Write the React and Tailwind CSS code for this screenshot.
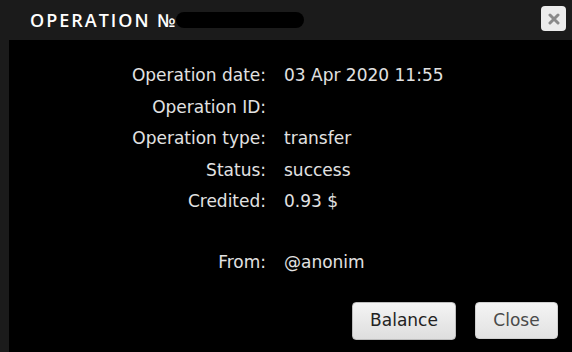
export default function App() {
  const rows = [
    ["Operation date:", "03 Apr 2020 11:55"],
    ["Operation ID:", ""],
    ["Operation type:", "transfer"],
    ["Status:", "success"],
    ["Credited:", "0.93 $"],
  ];
  return (
    <div className="w-[572px] h-[352px] bg-[#1b1b1b] flex flex-col overflow-hidden" style={{ fontFamily: "'DejaVu Sans', sans-serif" }}>
      <div className="h-[40px] flex items-center justify-between pl-[30px] pr-[6px] shrink-0">
        <div className="flex items-center">
          <span className="text-white text-[18px] font-semibold tracking-[2px] leading-none" style={{ fontFamily: "'Open Sans', sans-serif" }}>OPERATION №</span>
          <div className="ml-[-2px] w-[128px] h-[16px] bg-black rounded-full" />
        </div>
        <button className="w-[25px] h-[25px] rounded-[4px] bg-[#ececec] flex items-center justify-center mb-[3px]">
          <svg width="12" height="12" viewBox="0 0 12 12">
            <path d="M2 2 L10 10 M10 2 L2 10" stroke="#8a8a8a" strokeWidth="3" strokeLinecap="round" />
          </svg>
        </button>
      </div>
      <div className="flex-1 ml-[9px] bg-black flex flex-col">
        <div className="grid grid-cols-[257px_1fr] gap-x-[18px] gap-y-[8px] pt-[24px] text-[17px] text-[#e2e2e2] leading-[23.5px]">
          {rows.map(([k, v]) => (
            <div key={k} className="contents">
              <div className="text-right">{k}</div>
              <div>{v}</div>
            </div>
          ))}
          <div className="text-right mt-[29px]">From:</div>
          <div className="mt-[29px]">@anonim</div>
        </div>
        <div className="mt-auto flex justify-end gap-[19px] pr-[14px] pb-[12px]">
          <button className="w-[104px] h-[38px] rounded-[4px] bg-gradient-to-b from-[#f4f4f4] to-[#dedede] border border-[#bdbdbd] text-[#222] text-[17px]">Balance</button>
          <button className="w-[83px] h-[37px] rounded-[4px] bg-gradient-to-b from-[#f4f4f4] to-[#e2e2e2] border border-[#cfcfcf] text-[#4a4a4a] text-[17px]">Close</button>
        </div>
      </div>
    </div>
  );
}
